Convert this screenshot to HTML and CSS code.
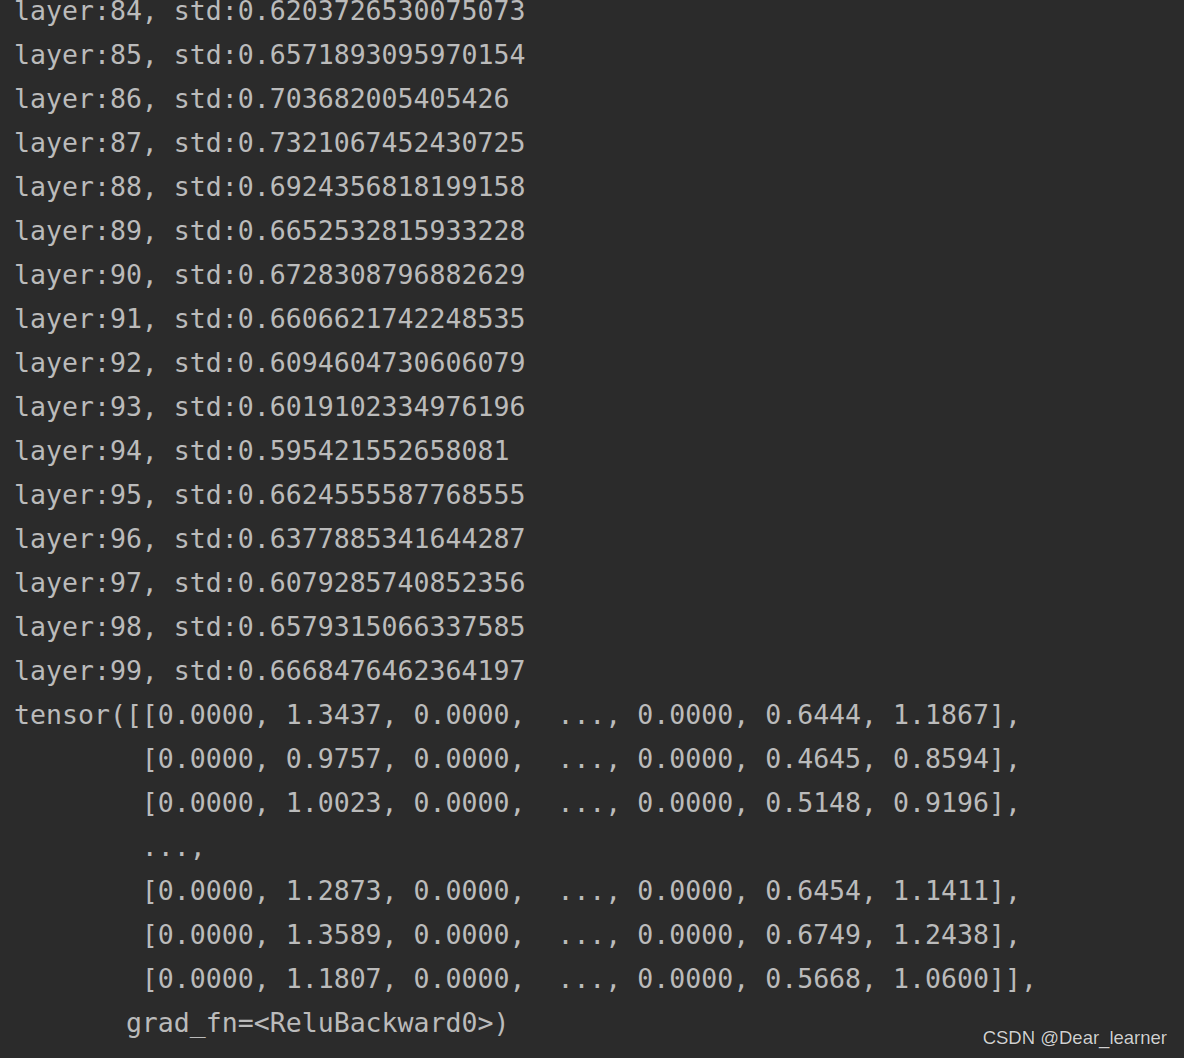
FILE: index.html
```html
<!DOCTYPE html>
<html>
<head>
<meta charset="utf-8">
<link rel="stylesheet" href="styles.css">
</head>
<body>
<main class="console">
<pre class="output">layer:84, std:0.6203726530075073
layer:85, std:0.6571893095970154
layer:86, std:0.703682005405426
layer:87, std:0.7321067452430725
layer:88, std:0.6924356818199158
layer:89, std:0.6652532815933228
layer:90, std:0.6728308796882629
layer:91, std:0.6606621742248535
layer:92, std:0.6094604730606079
layer:93, std:0.6019102334976196
layer:94, std:0.595421552658081
layer:95, std:0.6624555587768555
layer:96, std:0.6377885341644287
layer:97, std:0.6079285740852356
layer:98, std:0.6579315066337585
layer:99, std:0.6668476462364197
tensor([[0.0000, 1.3437, 0.0000,  ..., 0.0000, 0.6444, 1.1867],
        [0.0000, 0.9757, 0.0000,  ..., 0.0000, 0.4645, 0.8594],
        [0.0000, 1.0023, 0.0000,  ..., 0.0000, 0.5148, 0.9196],
        ...,
        [0.0000, 1.2873, 0.0000,  ..., 0.0000, 0.6454, 1.1411],
        [0.0000, 1.3589, 0.0000,  ..., 0.0000, 0.6749, 1.2438],
        [0.0000, 1.1807, 0.0000,  ..., 0.0000, 0.5668, 1.0600]],
       grad_fn=&lt;ReluBackward0&gt;)</pre>
<div class="watermark">CSDN @Dear_learner</div>
</main>
</body>
</html>
```
FILE: styles.css
```css
html, body {
  margin: 0;
  padding: 0;
  background: #2b2b2b;
  height: 100%;
  overflow: hidden;
}
.console {
  position: relative;
  width: 1184px;
  height: 1058px;
  background: #2b2b2b;
}
.output {
  display: inline-block;
  margin: 0;
  padding: 0 0 0 14px;
  transform: translateY(-11px);
  font-family: "DejaVu Sans Mono", "Liberation Mono", monospace;
  font-size: 26.55px;
  line-height: 44px;
  color: #bbbbbb;
}
.watermark {
  position: absolute;
  right: 17px;
  bottom: 9px;
  font-family: "Liberation Sans", Arial, sans-serif;
  font-size: 18.5px;
  color: #d0d0d0;
  text-shadow: 0 0 1px #000;
}
```
